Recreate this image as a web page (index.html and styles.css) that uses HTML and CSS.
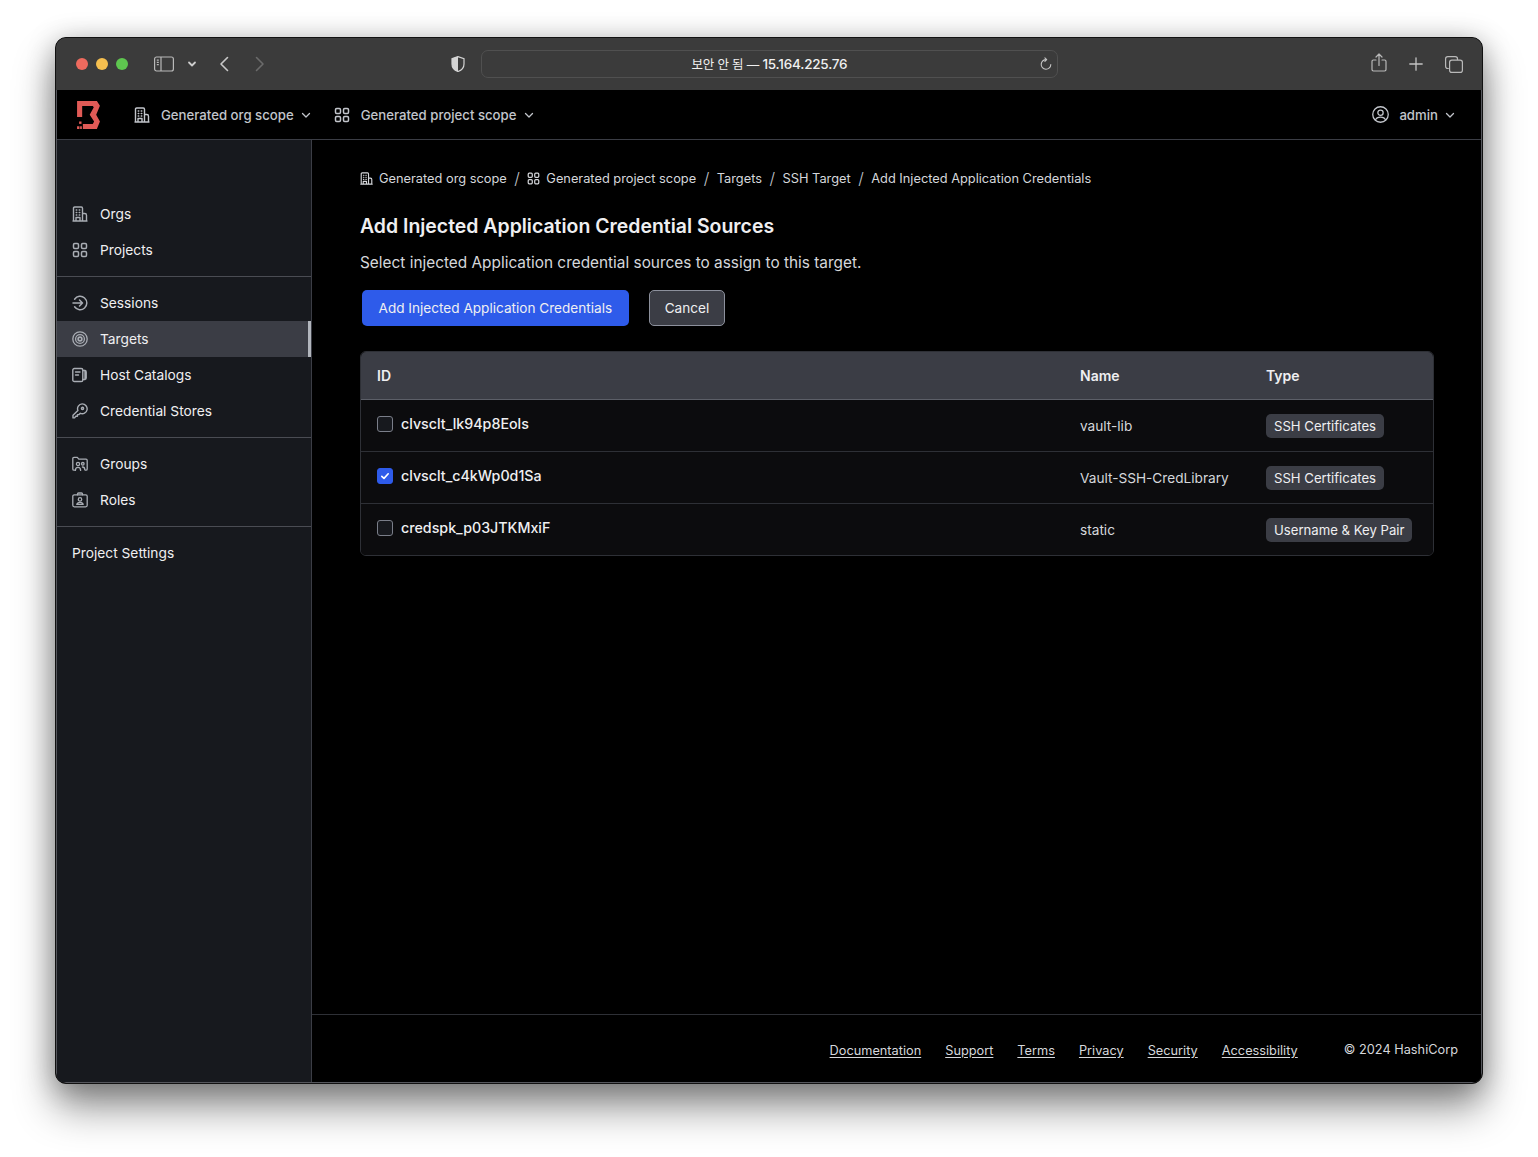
FILE: index.html
```html
<!DOCTYPE html>
<html lang="en">
<head>
<meta charset="utf-8">
<title>Add Injected Application Credential Sources</title>
<link rel="stylesheet" href="styles.css">
</head>
<body>
<svg class="sprite" aria-hidden="true">
  <symbol id="i-org" viewBox="0 0 16 16" fill="none" stroke="currentColor" stroke-width="1.4" stroke-linejoin="round" stroke-linecap="round">
    <path d="M1.500 15V2.200C1.500 1.500 2 1 2.700 1h6.600c.7 0 1.200.5 1.200 1.200V15M1 15h14M10.500 7.500h2.300c1 0 1.700.8 1.700 1.700V15M4 15v-3.500h4V15"/>
    <path d="M4.200 4h.6M7.200 4h.6M4.200 6.500h.6M7.200 6.500h.6M4.200 9h.6M7.200 9h.6"/>
  </symbol>
  <symbol id="i-grid" viewBox="0 0 16 16" fill="none" stroke="currentColor" stroke-width="1.5">
    <rect x="1.500" y="1.500" width="5" height="5" rx="1.200"/><rect x="9.500" y="1.500" width="5" height="5" rx="1.200"/>
    <rect x="1.500" y="9.500" width="5" height="5" rx="1.200"/><rect x="9.500" y="9.500" width="5" height="5" rx="1.200"/>
  </symbol>
  <symbol id="i-session" viewBox="0 0 16 16" fill="none" stroke="currentColor" stroke-width="1.5" stroke-linecap="round" stroke-linejoin="round">
    <path d="M2.600 4.200A6.700 6.700 0 1 1 2.600 11.800M1 8h9.500M7.500 5l3 3-3 3"/>
  </symbol>
  <symbol id="i-target" viewBox="0 0 16 16" fill="none" stroke="currentColor" stroke-width="1.3">
    <circle cx="8" cy="8" r="7.200"/><circle cx="8" cy="8" r="4.400"/><circle cx="8" cy="8" r="1.900" stroke-width="1.600"/>
  </symbol>
  <symbol id="i-catalog" viewBox="0 0 16 16" fill="none" stroke="currentColor" stroke-width="1.4" stroke-linejoin="round" stroke-linecap="round">
    <rect x=".8" y="1.500" width="10" height="13" rx="1.600"/><path d="M3.500 5h4.500M3.500 8h3M10.800 3.500h2c1 0 1.400.6 1.400 1.400v6.200c0 .8-.4 1.400-1.400 1.400h-2M13 3.500v9"/>
  </symbol>
  <symbol id="i-key" viewBox="0 0 16 16" fill="none" stroke="currentColor" stroke-width="1.4" stroke-linejoin="round" stroke-linecap="round">
    <path d="M10.200.9a4.900 4.900 0 1 1-1.900 9.400L7 11.600H5.400v1.600H3.800L2.600 14.900H1v-2.600l4.900-4.700A4.900 4.900 0 0 1 10.200.9Z"/><circle cx="10.500" cy="5.400" r="1.100"/>
  </symbol>
  <symbol id="i-groups" viewBox="0 0 16 16" fill="none" stroke="currentColor" stroke-width="1.3" stroke-linejoin="round" stroke-linecap="round">
    <path d="M2.500 14.200H2A1.200 1.200 0 0 1 .8 13V2.600c0-.7.5-1.200 1.200-1.200h3.300l1.500 1.800H14c.7 0 1.200.5 1.200 1.200V13c0 .7-.5 1.200-1.200 1.200h-.5"/>
    <circle cx="6" cy="8" r="1.600"/><circle cx="10.800" cy="7.800" r="1.300"/><path d="M3.400 14.400c0-2 1-3 2.600-3s2.600 1 2.600 3M10.400 11c1.600 0 2.400 1 2.400 2.800"/>
  </symbol>
  <symbol id="i-role" viewBox="0 0 16 16" fill="none" stroke="currentColor" stroke-width="1.3" stroke-linejoin="round" stroke-linecap="round">
    <rect x=".8" y="2.800" width="14.400" height="12" rx="1.500"/><path d="M5.500 2.800V2c0-.6.4-1 1-1h3c.6 0 1 .4 1 1v.8"/><circle cx="8" cy="7.400" r="1.700"/><path d="M4.800 12.400c.3-1.500 1.500-2.100 3.200-2.100s2.900.6 3.200 2.100Z"/>
  </symbol>
  <symbol id="i-chev" viewBox="0 0 10 10" fill="none" stroke="currentColor" stroke-width="1.3" stroke-linecap="round" stroke-linejoin="round">
    <path d="M1.500 3.500 5 7l3.500-3.500"/>
  </symbol>
</svg>

<div class="window">
  <header class="titlebar">
    <div class="lights"><span class="light red"></span><span class="light yellow"></span><span class="light green"></span></div>
    <svg class="tb-sidebar" viewBox="0 0 20 16" fill="none" stroke="currentColor" stroke-width="1.2"><rect x=".6" y="1" width="18.800" height="14" rx="2"/><path d="M7 1v14M2.800 4.200h2M2.800 6.400h2M2.800 8.600h2"/></svg>
    <svg class="tb-chev" viewBox="0 0 10 10" fill="none" stroke="currentColor" stroke-width="1.8" stroke-linecap="round" stroke-linejoin="round"><path d="M2 3.500 5 6.500l3-3"/></svg>
    <svg class="tb-back" viewBox="0 0 10 16" fill="none" stroke="currentColor" stroke-width="1.6" stroke-linecap="round" stroke-linejoin="round"><path d="M8.500 1.500 2 8l6.500 6.500"/></svg>
    <svg class="tb-forward" viewBox="0 0 10 16" fill="none" stroke="currentColor" stroke-width="1.6" stroke-linecap="round" stroke-linejoin="round"><path d="M1.500 1.500 8 8l-6.500 6.500"/></svg>
    <svg class="tb-shield" viewBox="0 0 14 16"><path d="M7 .6 1 2.600v5.300C1 11.600 3.500 14.200 7 15.500c3.500-1.300 6-3.900 6-7.600V2.600Z" fill="none" stroke="#d4d4d4" stroke-width="1.200"/><path d="M7 .6 1 2.600v5.300C1 11.600 3.500 14.200 7 15.500Z" fill="#d4d4d4"/></svg>
    <div class="address">
      <span class="address-text"><span class="address-ko">보안 안 됨 —</span> 15.164.225.76</span>
      <svg class="reload" viewBox="0 0 14 14" fill="none" stroke="currentColor" stroke-width="1.100" stroke-linecap="round" stroke-linejoin="round"><path d="M7.500 2.700A4.800 4.800 0 1 0 11.800 7.500M5.900.9l1.800 1.800-1.800 1.700"/></svg>
    </div>
    <div class="tb-actions">
      <svg class="tb-share" viewBox="0 0 16 20" fill="none" stroke="currentColor" stroke-width="1.200" stroke-linecap="round" stroke-linejoin="round"><path d="M5 7H2.400C1.600 7 1 7.600 1 8.400v8.200c0 .8.600 1.400 1.400 1.400h11.200c.8 0 1.400-.6 1.400-1.400V8.400C15 7.600 14.400 7 13.600 7H11M8 12.500V1.500M5 4l3-3 3 3"/></svg>
      <svg class="tb-plus" viewBox="0 0 14 14" fill="none" stroke="currentColor" stroke-width="1.300" stroke-linecap="round"><path d="M7 .8v12.400M.8 7h12.400"/></svg>
      <svg class="tb-tabs" viewBox="0 0 18 17" fill="none" stroke="currentColor" stroke-width="1.200"><rect x="4.600" y="4.100" width="12.800" height="12.300" rx="2.200"/><path d="M3.800 12.500H2.800C1.500 12.500.6 11.600.6 10.300V2.800C.6 1.500 1.500.6 2.800.6h7.500c1.300 0 2.200.9 2.200 2.200v1.200"/></svg>
    </div>
  </header>

  <nav class="topnav">
    <svg class="logo" viewBox="0 0 67 82" fill="#e05a56">
      <path d="M0 0H58L67 14 56 40 67 60 58 82H17V67H46L50 60 37 40 49 18 46 15H15V47H0Z"/>
      <rect x="6" y="60" width="7" height="7"/><rect x="0" y="74" width="7" height="8"/><rect x="9" y="74" width="5" height="8"/>
    </svg>
    <button class="scope scope-org" type="button"><svg class="icon"><use href="#i-org"/></svg><span>Generated org scope</span><svg class="chev"><use href="#i-chev"/></svg></button>
    <button class="scope scope-project" type="button"><svg class="icon"><use href="#i-grid"/></svg><span>Generated project scope</span><svg class="chev"><use href="#i-chev"/></svg></button>
    <button class="user" type="button">
      <svg class="user-icon" viewBox="0 0 16 16" fill="none" stroke="currentColor" stroke-width="1.200"><circle cx="8" cy="8" r="7.300"/><circle cx="8" cy="6.300" r="2.500"/><path d="M3.200 13.300c.7-2 2.500-2.800 4.800-2.800s4.100.8 4.800 2.800"/></svg>
      <span>admin</span><svg class="chev"><use href="#i-chev"/></svg>
    </button>
  </nav>

  <div class="body">
    <aside class="sidebar">
      <ul class="side-group side-first">
        <li class="side-item"><svg class="icon"><use href="#i-org"/></svg>Orgs</li>
        <li class="side-item"><svg class="icon"><use href="#i-grid"/></svg>Projects</li>
      </ul>
      <ul class="side-group">
        <li class="side-item"><svg class="icon"><use href="#i-session"/></svg>Sessions</li>
        <li class="side-item active"><svg class="icon"><use href="#i-target"/></svg>Targets</li>
        <li class="side-item"><svg class="icon"><use href="#i-catalog"/></svg>Host Catalogs</li>
        <li class="side-item"><svg class="icon"><use href="#i-key"/></svg>Credential Stores</li>
      </ul>
      <ul class="side-group">
        <li class="side-item"><svg class="icon"><use href="#i-groups"/></svg>Groups</li>
        <li class="side-item"><svg class="icon"><use href="#i-role"/></svg>Roles</li>
      </ul>
      <ul class="side-group side-last">
        <li class="side-item">Project Settings</li>
      </ul>
    </aside>

    <main class="main">
      <div class="content">
        <ol class="crumbs">
          <li><svg class="crumb-icon"><use href="#i-org"/></svg>Generated org scope</li>
          <li class="sep">/</li>
          <li><svg class="crumb-icon"><use href="#i-grid"/></svg>Generated project scope</li>
          <li class="sep">/</li>
          <li>Targets</li>
          <li class="sep">/</li>
          <li>SSH Target</li>
          <li class="sep">/</li>
          <li>Add Injected Application Credentials</li>
        </ol>
        <h1 class="title">Add Injected Application Credential Sources</h1>
        <p class="desc">Select injected Application credential sources to assign to this target.</p>
        <div class="actions">
          <button class="btn btn-primary" type="button">Add Injected Application Credentials</button>
          <button class="btn btn-secondary" type="button">Cancel</button>
        </div>
        <div class="table-wrap">
          <table class="table">
            <colgroup><col class="col-id"><col class="col-name"><col class="col-type"></colgroup>
            <thead><tr><th>ID</th><th>Name</th><th>Type</th></tr></thead>
            <tbody>
              <tr>
                <td class="cell-id"><span class="id-wrap"><span class="check"></span>clvsclt_lk94p8Eols</span></td>
                <td>vault-lib</td>
                <td><span class="badge">SSH Certificates</span></td>
              </tr>
              <tr>
                <td class="cell-id"><span class="id-wrap"><span class="check checked"><svg viewBox="0 0 10 10" fill="none" stroke="#fff" stroke-width="1.600" stroke-linecap="round" stroke-linejoin="round"><path d="M1.800 5.300 4 7.400 8.200 2.800"/></svg></span>clvsclt_c4kWp0d1Sa</span></td>
                <td>Vault-SSH-CredLibrary</td>
                <td><span class="badge">SSH Certificates</span></td>
              </tr>
              <tr>
                <td class="cell-id"><span class="id-wrap"><span class="check"></span>credspk_p03JTKMxiF</span></td>
                <td>static</td>
                <td><span class="badge">Username &amp; Key Pair</span></td>
              </tr>
            </tbody>
          </table>
        </div>
      </div>
      <footer class="footer">
        <a href="#">Documentation</a>
        <a href="#">Support</a>
        <a href="#">Terms</a>
        <a href="#">Privacy</a>
        <a href="#">Security</a>
        <a href="#">Accessibility</a>
        <span class="copy">© 2024 HashiCorp</span>
      </footer>
    </main>
  </div>
</div>
</body>
</html>
```

FILE: styles.css
```css
* { box-sizing: border-box; }
html, body { margin: 0; padding: 0; }
body {
  width: 1538px;
  height: 1157px;
  overflow: hidden;
  background: #fff;
  padding: 37px 55px 0;
  font-family: Inter, "Noto Sans CJK KR", sans-serif;
  color: #efeff1;
}
.sprite { display: none; }
ul, ol { list-style: none; margin: 0; padding: 0; }
button { font: inherit; background: none; border: 0; padding: 0; color: inherit; }

.window {
  width: 1428px;
  height: 1047px;
  display: flex;
  flex-direction: column;
  border-radius: 11px;
  overflow: hidden;
  background: #000;
  border: 1px solid #111;
  box-shadow: inset 0 0 0 1px #55565c, 0 24px 40px rgba(0,0,0,.42), 0 4px 28px rgba(0,0,0,.28);
}

/* browser chrome */
.titlebar {
  height: 52px;
  flex: none;
  display: flex;
  align-items: center;
  background: #3b3b3b;
  color: #b9b9b9;
  padding-left: 20px;
}
.lights { display: flex; gap: 8px; width: 78px; }
.light { width: 12px; height: 12px; border-radius: 50%; }
.red { background: #ee6a5e; }
.yellow { background: #f5bf4f; }
.green { background: #5ec64f; }
.tb-sidebar { width: 20px; height: 16px; flex: none; }
.tb-chev { width: 10px; height: 10px; margin-left: 13px; flex: none; color: #ccc; }
.tb-back { width: 10px; height: 16px; margin-left: 22px; flex: none; color: #c8c8c8; }
.tb-forward { width: 10px; height: 16px; margin-left: 26px; flex: none; color: #6b6b6b; }
.tb-shield { width: 14px; height: 16px; margin-left: 186px; flex: none; }
.address {
  width: 577px;
  height: 28px;
  margin-left: 16px;
  padding-bottom: 2px;
  flex: none;
  position: relative;
  display: flex;
  align-items: center;
  justify-content: center;
  border: 1px solid #505050;
  border-radius: 7px;
  font-size: 13.500px;
  font-weight: 500;
  color: #f0f0f0;
}
.address-text { letter-spacing: -.2px; }
.address-ko { font-weight: 400; font-size: 12.500px; }
.reload { position: absolute; right: 4px; top: 6px; width: 14px; height: 14px; color: #c4c4c4; }
.tb-actions { display: flex; align-items: center; margin-left: 313px; }
.tb-share { width: 16px; height: 20px; margin-top: -3px; }
.tb-plus { width: 14px; height: 14px; margin-left: 22px; color: #c4c4c4; }
.tb-tabs { width: 18px; height: 17px; margin-left: 22px; }

/* app top bar */
.topnav {
  height: 50px;
  flex: none;
  display: flex;
  align-items: center;
  background: #000;
  border-bottom: 1px solid #3b3d45;
  margin: 0 1px;
  padding-left: 20px;
  font-size: 13.200px;
  font-weight: 500;
  color: #c2c5cb;
}
.logo { width: 23px; height: 28px; flex: none; }
.scope { display: flex; align-items: center; height: 24px; }
.scope .icon { width: 16px; height: 16px; margin-right: 11px; }
.scope-org { margin-left: 34px; }
.scope-project { margin-left: 23px; }
.chev { width: 10px; height: 10px; margin-left: 7px; }
.user { display: flex; align-items: center; margin-left: auto; margin-right: 26px; }
.user-icon { width: 17px; height: 17px; margin-right: 10px; }
.user .chev { margin-left: 7px; }

/* body */
.body { flex: 1; min-height: 0; display: flex; margin: 0 1px 1px; }
.sidebar {
  width: 255px;
  flex: none;
  background: #17191e;
  border-right: 1px solid #3b3d45;
  font-size: 13.750px;
  color: #efeff1;
}
.side-group { padding: 8px 0; border-bottom: 1px solid #4a4c53; }
.side-first { padding-top: 56px; }
.side-last { border-bottom: 0; }
.side-item {
  height: 36px;
  display: flex;
  align-items: center;
  padding: 0 0 1px 15px;
}
.side-item .icon { width: 16px; height: 16px; margin-right: 12px; color: #a9adb4; flex: none; }
.active { background: #3b3d45; box-shadow: inset -3px 0 0 #b2b6bd; }

/* main */
.main { flex: 1; min-width: 0; display: flex; flex-direction: column; background: #000; }
.content { flex: 1; padding: 29px 48px 0; }
.crumbs { display: flex; align-items: center; height: 18px; font-size: 12.800px; color: #d5d7db; }
.crumbs li { display: flex; align-items: center; white-space: nowrap; }
.crumb-icon { width: 13px; height: 13px; margin-right: 6px; }
.crumbs .sep { margin: 0 7.500px; font-size: 16px; color: #c2c5cb; font-weight: 300; }
.title { margin: 25px 0 0; font-size: 19.450px; line-height: 28px; font-weight: 600; color: #efeff1; }
.desc { margin: 11px 0 0; font-size: 15.380px; line-height: 24px; color: #d5d7db; }
.actions { display: flex; gap: 20px; margin: 15px 0 0 2px; }
.btn { height: 36px; border-radius: 5px; font-size: 13.600px; padding: 0 16.500px; font-weight: 400; color: #efeff1; }
.btn-primary { background: #2e5bea; }
.btn-secondary { background: #3b3d45; border: 1px solid #8c909c; padding: 0 15px; }

.table-wrap {
  margin-top: 25px;
  width: 1074px;
  border: 1px solid #2e3036;
  border-radius: 6px;
  overflow: hidden;
}
.table { width: 100%; border-collapse: collapse; table-layout: fixed; background: #0c0c0e; font-size: 14px; }
.col-id { width: 703px; }
.col-name { width: 186px; }
thead tr { height: 47px; background: #3b3d45; }
th { text-align: left; font-weight: 600; padding: 0 16px; color: #efeff1; border-bottom: 1px solid #5c5f68; }
td { height: 52px; padding: 2px 16px 0; font-size: 13.650px; color: #d5d7db; border-top: 1px solid #2e3036; }
tbody tr:first-child td { border-top: 0; }
.cell-id { font-size: 14.250px; font-weight: 500; color: #efeff1; }
.id-wrap { display: flex; align-items: center; gap: 8px; position: relative; top: -3px; }
.check {
  width: 16px;
  height: 16px;
  flex: none;
  position: relative;
  top: 1px;
  background: #17191e;
  border: 1px solid #7a7e89;
  border-radius: 3px;
  display: flex;
  align-items: center;
  justify-content: center;
}
.check svg { width: 10px; height: 10px; }
.checked { background: #2e5bea; border-color: #2e5bea; }
.badge {
  display: inline-block;
  height: 24px;
  line-height: 24px;
  padding: 0 8px;
  border-radius: 5px;
  background: #3b3d45;
  color: #efeff1;
  font-size: 13.150px;
}

.footer {
  flex: none;
  height: 68px;
  display: flex;
  align-items: center;
  justify-content: flex-end;
  gap: 24px;
  padding: 3px 23px 0 0;
  border-top: 1px solid #2e3036;
  font-size: 12.750px;
  color: #d5d7db;
}
.footer a { color: #d5d7db; text-decoration: underline; text-underline-offset: 2px; }
.copy { margin-left: 22px; position: relative; top: -1px; }
```
